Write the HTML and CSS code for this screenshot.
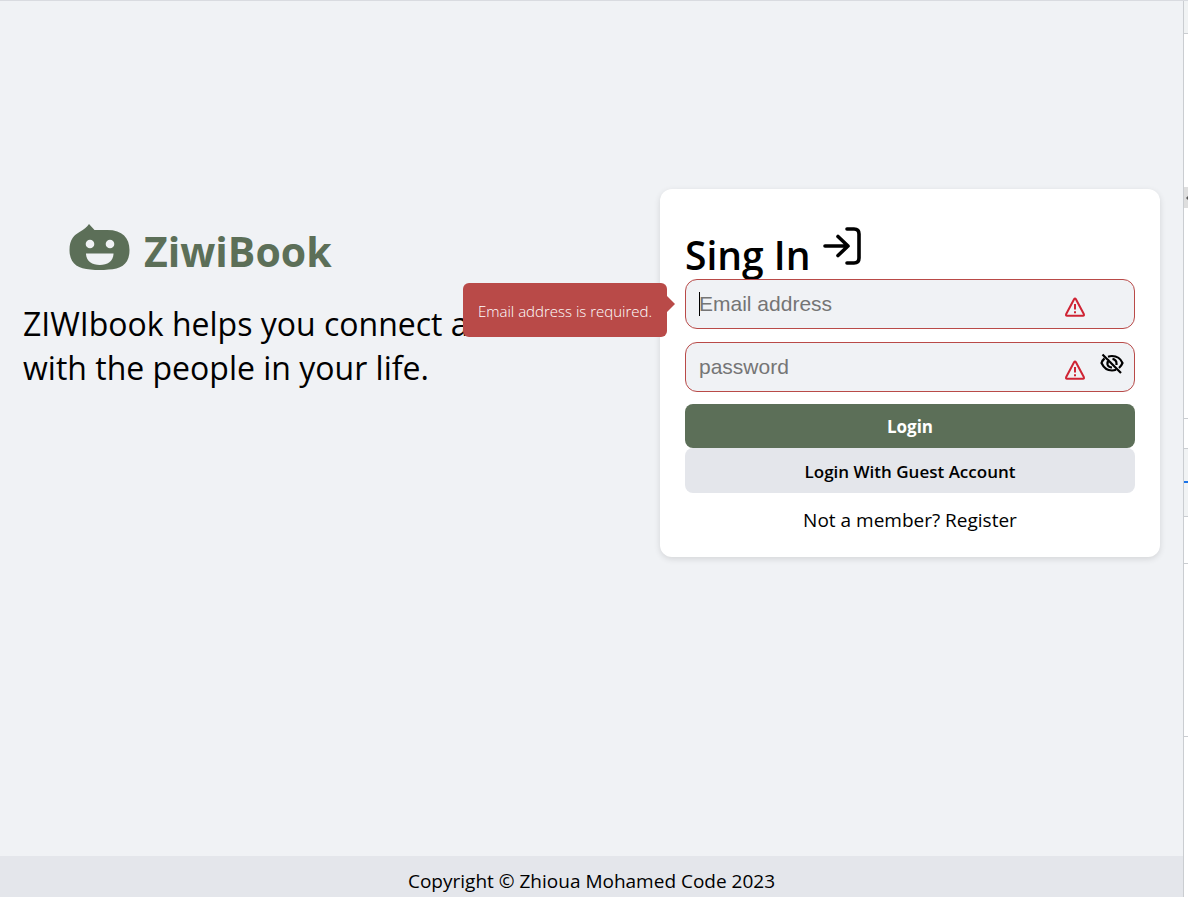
FILE: index.html
```html
<!DOCTYPE html>
<html lang="en">
<head>
<meta charset="utf-8">
<meta name="viewport" content="width=device-width, initial-scale=1">
<title>ZiwiBook</title>
<link rel="stylesheet" href="styles.css">
</head>
<body>
<div class="app">
  <main class="main">
    <section class="hero">
      <div class="brand">
        <svg class="brand-icon" viewBox="0 0 60 47" aria-hidden="true">
          <path fill="#5c6f58" d="M19.500 0L25 6H38C53 6 60 14 60 26C60 40 52 45 39 45.500Q30 46.500 21 45.500C8 45 0 39 0 26C0 15 5 11 10 8Q17 4 19.500 0Z"/>
          <circle cx="20.500" cy="20" r="4.300" fill="#f0f2f5"/>
          <circle cx="40.500" cy="20" r="4.300" fill="#f0f2f5"/>
          <path fill="#f0f2f5" d="M16.500 29.500H44C44 37 38 41 30.300 41S16.500 37 16.500 29.500Z"/>
        </svg>
        <span class="brand-name">ZiwiBook</span>
      </div>
      <p class="tagline">ZIWIbook helps you connect and share with the people in your life.</p>
    </section>
    <form class="card">
      <h1 class="title">Sing In
        <svg class="title-icon" viewBox="0 0 38 38" fill="none" stroke="#000" stroke-width="3.600" stroke-linecap="round" stroke-linejoin="round" aria-hidden="true"><path d="M24 2H31Q36 2 36 7V31Q36 36 31 36H24M2 19H25M15 9.500L25 19L15 28.500"/></svg>
      </h1>
      <div class="field">
        <input class="input" type="email" placeholder="Email address" aria-label="Email address" aria-describedby="email-error">
        <span class="caret"></span>
        <svg class="warning" viewBox="0 0 20 20" fill="none" stroke="#cf2434" stroke-width="2" stroke-linejoin="round" aria-hidden="true"><path d="M9.200 2Q10 .800 10.800 2L18.800 17Q19.400 18.800 18 18.800H2Q.600 18.800 1.200 17Z"/><path d="M10 7V12.500M10 14.200V16.200"/></svg>
        <div class="tooltip" id="email-error" role="alert">Email address is required.</div>
      </div>
      <div class="field">
        <input class="input" type="password" placeholder="password" aria-label="Password">
        <svg class="warning" viewBox="0 0 20 20" fill="none" stroke="#cf2434" stroke-width="2" stroke-linejoin="round" aria-hidden="true"><path d="M9.200 2Q10 .800 10.800 2L18.800 17Q19.400 18.800 18 18.800H2Q.600 18.800 1.200 17Z"/><path d="M10 7V12.500M10 14.200V16.200"/></svg>
        <button class="toggle" type="button" aria-label="Show password">
          <svg class="toggle-icon" viewBox="0 0 24 22" fill="none" stroke="#000" stroke-width="2.200" aria-hidden="true"><path d="M4.500 5.500Q2.500 7 1.500 10Q5 17.500 12 17.500Q14 17.500 16 16.800M8 3.700Q10 3 12 3Q19.500 3 22.500 10Q21.300 13 19 15M9.500 7Q7 8.500 7.500 11.500Q8.500 14.500 12 14.500M12.500 5.800Q16.500 6.500 16.500 10.500V12M10.500 9.500L13 12M2.500 1.500L21 20"/></svg>
        </button>
      </div>
      <div class="actions">
        <button class="button button-primary" type="submit">Login</button>
        <button class="button button-guest" type="button">Login With Guest Account</button>
      </div>
      <p class="register">Not a member? <a class="register-link" href="#">Register</a></p>
    </form>
  </main>
  <footer class="footer">Copyright © Zhioua Mohamed Code 2023</footer>
</div>
<aside class="panel" aria-hidden="true">
  <div class="panel-head"></div>
  <div class="panel-view"><span class="panel-handle"></span></div>
  <div class="panel-row"></div>
  <div class="panel-tabs"></div>
  <div class="panel-bar"></div>
  <div class="panel-filter"></div>
  <div class="panel-body"></div>
</aside>
</body>
</html>
```
FILE: styles.css
```css
* { box-sizing: border-box; }
body {
  margin: 0;
  min-height: 100vh;
  display: flex;
  border-top: 1px solid #d9dbe0;
  background: #f0f2f5;
  color: #000;
  font-family: "Open Sans", "Noto Sans", sans-serif;
}
.app { flex: 1; min-width: 0; display: flex; flex-direction: column; }
.main {
  flex: 1;
  display: flex;
  justify-content: space-between;
  align-items: flex-start;
  padding: 188px 23px 40px;
}
.hero { flex: 0 1 610px; padding-top: 34px; }
.brand { display: flex; align-items: center; gap: 14px; margin-left: 46px; height: 48px; }
.brand-icon { width: 61px; height: 47px; }
.brand-name { font-size: 41px; line-height: 48px; font-weight: 700; color: #5c6f58; padding-top: 8px; }
.tagline { margin: 31px 0 0; font-size: 32px; line-height: 44px; }
.card {
  flex: none;
  width: 500px;
  padding: 38px 25px 24px;
  background: #fff;
  border-radius: 12px;
  box-shadow: 0 2px 6px rgba(0, 0, 0, .12);
  display: flex;
  flex-direction: column;
}
.title { display: flex; gap: 12px; margin: 0; font-size: 39px; line-height: 52px; font-weight: 600; padding-top: 0; }
.title { line-height: 56px; height: 52px; }
.title-icon { width: 38px; height: 38px; }
.field { position: relative; display: flex; margin-bottom: 13px; }
.input {
  width: 100%;
  height: 50px;
  padding: 0 80px 0 13px;
  border: 1px solid #b94a48;
  border-radius: 12px;
  background: #f0f2f5;
  font: 21px "Liberation Sans", sans-serif;
  outline: 0;
}
.input::placeholder { color: #757575; opacity: 1; }
.caret { position: absolute; left: 14px; top: 13px; width: 1px; height: 24px; background: #000; }
.warning { position: absolute; right: 50px; top: 18px; width: 20px; height: 20px; }
.toggle { position: absolute; right: 11px; top: 11px; padding: 0; border: 0; background: none; display: flex; }
.toggle-icon { width: 24px; height: 22px; }
.tooltip {
  position: absolute;
  right: calc(100% + 18px);
  top: 4px;
  width: 204px;
  padding: 17px 0 15px;
  border-radius: 6px;
  background: #b94a48;
  color: #fff;
  font-size: 15px;
  line-height: 22px;
  font-weight: 300;
  text-align: center;
  white-space: nowrap;
}
.tooltip::after {
  content: "";
  position: absolute;
  left: 100%;
  top: 13px;
  border: solid transparent;
  border-width: 8px 0 8px 8px;
  border-left-color: #b94a48;
}
.actions { display: flex; flex-direction: column; margin-top: -1px; }
.button { padding: 11px 10px 9px; border: 0; border-radius: 8px; font-family: inherit; font-size: 17px; line-height: 24px; }
.button-primary { background: #5c6f58; color: #fff; font-weight: 700; }
.button-guest { background: #e4e6eb; color: #000; font-weight: 600; line-height: 25px; }
.register { margin: 14px 0 0; font-size: 19px; line-height: 26px; text-align: center; }
.register-link { color: inherit; text-decoration: none; }
.footer { padding: 10px 10px 0; background: #e4e6eb; font-size: 19px; line-height: 31px; text-align: center; }
.panel { width: 5px; display: flex; flex-direction: column; border-left: 1px solid #cacdd1; background: #fff; }
.panel > div { border-bottom: 1px solid #cacdd1; }
.panel-head { height: 33px; background: #f1f3f4; }
.panel-view { height: 385px; padding-top: 153px; }
.panel-handle { display: flex; align-items: center; justify-content: flex-end; height: 21px; background: #dedede; }
.panel-handle::after { content: ""; border: solid transparent; border-width: 2px 2px 2px 0; border-right-color: #555; }
.panel-row { height: 30px; }
.panel .panel-tabs { height: 34px; background: #f1f3f4; border-bottom: 2px solid #1a73e8; }
.panel-bar { height: 34px; background: #f1f3f4; }
.panel-filter { height: 47px; }
.panel-body { height: 173px; }
```
